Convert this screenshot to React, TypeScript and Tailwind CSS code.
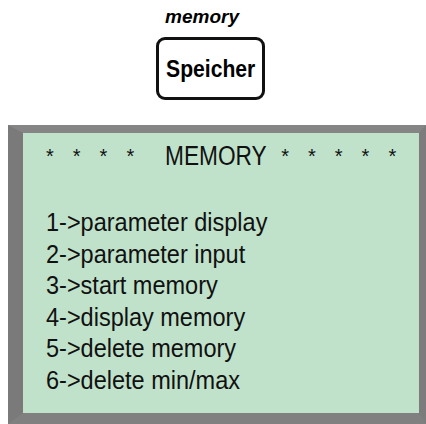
const menu = [
    '1->parameter display',
    '2->parameter input',
    '3->start memory',
    '4->display memory',
    '5->delete memory',
    '6->delete min/max',
]

export default function App() {
    return (
        <div className="w-[426px] h-[424px] bg-white flex flex-col overflow-hidden" style={{ fontFamily: '"Liberation Sans", Arial, sans-serif' }}>

            {/* ── KEY ── */}
            <div className="flex flex-col items-center pt-[5px]">
                <span className="mr-[22px] text-[19px] font-bold italic leading-[24px] text-black">memory</span>
                <div className="mt-[8px] mr-[5px] w-[109px] h-[63px] rounded-[9px] border-[3px] border-[#111] flex items-center justify-center">
                    <span className="text-[24px] font-bold text-black inline-block scale-x-[0.88]">Speicher</span>
                </div>
            </div>

            {/* ── LCD ── */}
            <div className="mt-[25px] ml-[8px] w-[418px] h-[299px] border-l-[15px] border-t-[8px] border-r-[7px] border-b-[11px] border-l-[#7a7a7a] border-t-[#858585] border-r-[#7c7c7c] border-b-[#808080]">
                <div className="h-full bg-[#c0e2cb] pl-[23px] pt-[6px] text-[#111]">
                    <div className="flex items-center h-[34px]">
                        <div className="flex gap-[19px] text-[20px]">
                            <span>*</span><span>*</span><span>*</span><span>*</span>
                        </div>
                        <span className="ml-[31px] text-[27px] inline-block origin-left scale-x-[0.84]">MEMORY</span>
                        <div className="flex gap-[19px] text-[20px] -ml-[5px]">
                            <span>*</span><span>*</span><span>*</span><span>*</span><span>*</span>
                        </div>
                    </div>
                    <div className="mt-[34px] flex flex-col items-start">
                        {menu.map(m => (
                            <span key={m} className="text-[25px] leading-[31.5px] inline-block origin-left scale-x-[0.94] whitespace-nowrap">{m}</span>
                        ))}
                    </div>
                </div>
            </div>

        </div>
    )
}
